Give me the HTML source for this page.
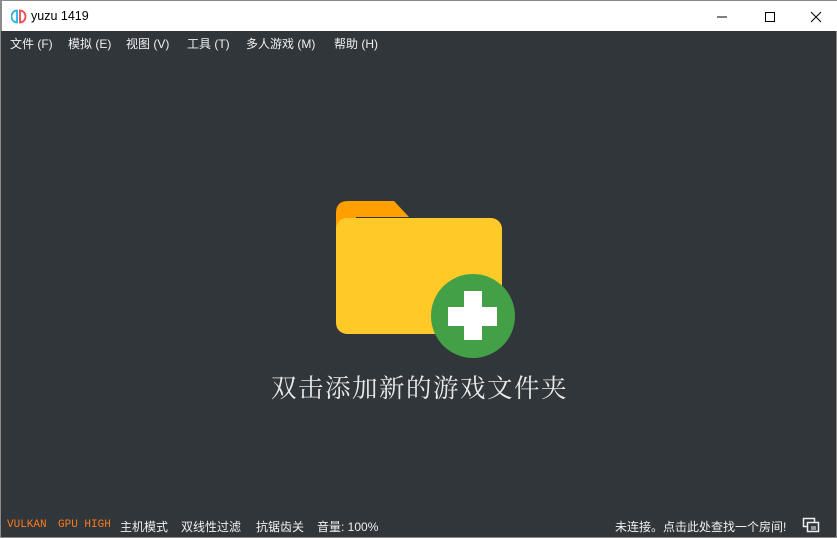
<!DOCTYPE html>
<html><head><meta charset="utf-8"><style>
*{margin:0;padding:0;box-sizing:border-box}
body{width:837px;height:538px;overflow:hidden;background:#31363b;font-family:"Liberation Sans","Noto Sans CJK SC",sans-serif;position:relative;border:1px solid #8a8a8a;border-top:none}
.title{position:absolute;left:0;top:0;width:837px;height:31px;background:#fff;border:1px solid #8a8a8a;border-bottom:none}
.title .t{position:absolute;left:29px;top:8px;font-size:12.5px;color:#000}
.menu{position:absolute;top:35px;left:0;font-size:12px;color:#eff0f1;white-space:nowrap}
.menu span{position:absolute}
.caption{position:absolute;left:270px;top:369px;font-size:25.5px;color:#e8e8e8;font-family:"Liberation Serif","Noto Serif CJK SC",serif;letter-spacing:1.5px;white-space:nowrap}
.status{position:absolute;top:518px;font-size:12px;color:#eff0f1;white-space:nowrap}
.mono{font-family:"Liberation Mono",monospace;color:#ff7a1a;font-size:11px;top:519px}
</style></head><body>
<div class="title">
<svg style="position:absolute;left:9px;top:8px" width="16" height="15" viewBox="0 0 16 15"><path d="M6 1.5A5.5 6 0 0 0 6 13.5Z" fill="none" stroke="#22b5e6" stroke-width="1.8"/><path d="M9 1.5A5.5 6 0 0 1 9 13.5Z" fill="none" stroke="#f0474a" stroke-width="1.8"/></svg>
<span class="t">yuzu 1419</span>
<svg style="position:absolute;left:710px;top:8px" width="120" height="16"><line x1="5" y1="8" x2="15" y2="8" stroke="#000"/><rect x="53.5" y="3.5" width="9" height="9" fill="none" stroke="#000"/><path d="M99 3L109 13M109 3L99 13" stroke="#000"/></svg>
</div>
<div class="menu">
<span style="left:9px">文件 (F)</span><span style="left:67px">模拟 (E)</span><span style="left:125px">视图 (V)</span><span style="left:186px">工具 (T)</span><span style="left:245px">多人游戏 (M)</span><span style="left:333px">帮助 (H)</span>
</div>
<svg style="position:absolute;left:330px;top:195px" width="190" height="170">
<path d="M5 18Q5 6 17 6H63L78 22H5Z" fill="#ffa000"/>
<rect x="5" y="10" width="20" height="110" rx="10" fill="#ffa000"/>
<rect x="5" y="23" width="166" height="116" rx="11" fill="#ffca28"/>
<circle cx="142" cy="121" r="42" fill="#43a047"/>
<rect x="117" y="112" width="49" height="19" fill="#fff"/>
<rect x="133" y="96" width="18" height="49" fill="#fff"/>
</svg>
<div class="caption">双击添加新的游戏文件夹</div>
<span class="status mono" style="left:6px">VULKAN</span>
<span class="status mono" style="left:57px">GPU HIGH</span>
<span class="status" style="left:119px">主机模式</span>
<span class="status" style="left:180px">双线性过滤</span>
<span class="status" style="left:255px">抗锯齿关</span>
<span class="status" style="left:316px">音量: 100%</span>
<span class="status" style="left:614px">未连接。点击此处查找一个房间!</span>
<svg style="position:absolute;left:801px;top:517px" width="18" height="16"><rect x="1.5" y="1.5" width="11" height="8" fill="none" stroke="#eee" stroke-width="1.5"/><rect x="5.5" y="5.5" width="11" height="9" fill="#31363b" stroke="#eee" stroke-width="1.5"/><rect x="9" y="9" width="5" height="4" fill="#999"/></svg>
</body></html>
